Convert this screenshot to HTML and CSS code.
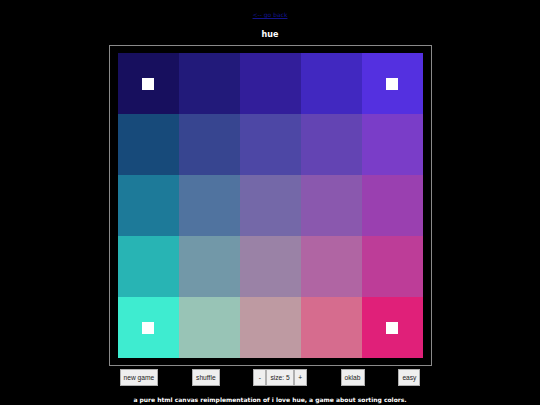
FILE: index.html
```html
<!DOCTYPE html>
<html>
<head>
<meta charset="utf-8">
<title>hue</title>
<link rel="stylesheet" href="styles.css">
</head>
<body>
<div class="page">
  <a class="back" href="#">&lt;-- go back</a>
  <h1 class="title">hue</h1>
  <div class="board">
    <div class="grid">
      <div class="cell" style="background:#170f5e"><span class="pin"></span></div>
      <div class="cell" style="background:#221a7a"></div>
      <div class="cell" style="background:#321e9a"></div>
      <div class="cell" style="background:#4128c0"></div>
      <div class="cell" style="background:#5430e0"><span class="pin"></span></div>

      <div class="cell" style="background:#174a7a"></div>
      <div class="cell" style="background:#374590"></div>
      <div class="cell" style="background:#4d47a5"></div>
      <div class="cell" style="background:#6344b3"></div>
      <div class="cell" style="background:#7a3dc8"></div>

      <div class="cell" style="background:#1d7a99"></div>
      <div class="cell" style="background:#50739f"></div>
      <div class="cell" style="background:#7468a8"></div>
      <div class="cell" style="background:#8a58ae"></div>
      <div class="cell" style="background:#9a40b0"></div>

      <div class="cell" style="background:#28b4b4"></div>
      <div class="cell" style="background:#7298a8"></div>
      <div class="cell" style="background:#9a82a6"></div>
      <div class="cell" style="background:#b065a3"></div>
      <div class="cell" style="background:#bd3d98"></div>

      <div class="cell" style="background:#3eecd0"><span class="pin"></span></div>
      <div class="cell" style="background:#98c4b6"></div>
      <div class="cell" style="background:#be9aa2"></div>
      <div class="cell" style="background:#d66c8e"></div>
      <div class="cell" style="background:#e02079"><span class="pin"></span></div>
    </div>
  </div>
  <div class="controls">
    <button class="btn">new game</button>
    <button class="btn">shuffle</button>
    <div class="size">
      <button class="btn btn-step">-</button>
      <button class="btn">size: 5</button>
      <button class="btn btn-step">+</button>
    </div>
    <button class="btn">oklab</button>
    <button class="btn">easy</button>
  </div>
  <p class="about">a pure html canvas reimplementation of i love hue, a game about sorting colors.</p>
</div>
</body>
</html>
```

FILE: styles.css
```css
html, body {
  margin: 0;
  padding: 0;
  background: #000;
}

.page {
  display: flex;
  flex-direction: column;
  align-items: center;
  font-family: "DejaVu Sans", sans-serif;
  color: #fff;
}

.back {
  display: block;
  margin-top: 11px;
  font-size: 6px;
  line-height: 8px;
  color: #14148c;
  text-decoration: underline;
}

.title {
  margin: 11px 0 0;
  font-size: 8px;
  line-height: 10px;
  font-weight: bold;
}

.board {
  margin-top: 5px;
  border: 1px solid #8a8a8a;
  padding: 7px 8px 7px 8px;
}

.grid {
  display: grid;
  grid-template-columns: repeat(5, 61px);
  grid-template-rows: repeat(5, 61px);
}

.cell {
  display: flex;
  align-items: center;
  justify-content: center;
}

.pin {
  width: 12px;
  height: 12px;
  background: #fff;
}

.controls {
  margin-top: 3px;
  width: 301px;
  display: flex;
  justify-content: space-between;
  align-items: center;
}

.size {
  display: flex;
}

.btn {
  height: 17px;
  margin: 0;
  padding: 0 3px;
  font-family: "Liberation Sans", Arial, sans-serif;
  font-size: 6.67px;
  color: #222;
  background: #efefef;
  border: 1px solid #b0b0b0;
  border-radius: 0;
}

.btn-step {
  min-width: 13px;
}

.about {
  margin: 10px 0 0;
  font-size: 6px;
  line-height: 8px;
  font-weight: bold;
}
```
